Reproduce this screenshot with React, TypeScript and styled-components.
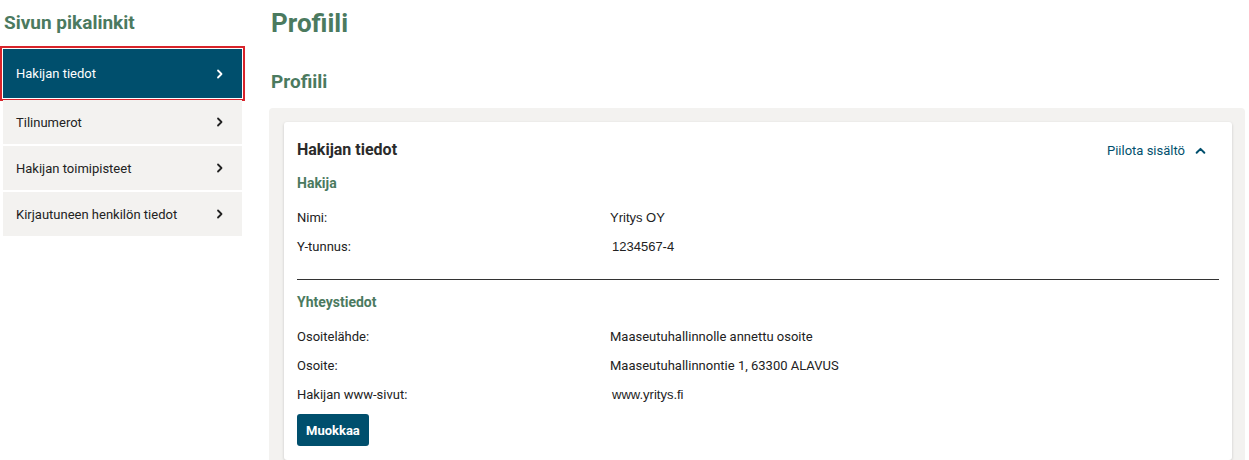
import React from 'react'
import styled, { createGlobalStyle } from 'styled-components'

const GlobalStyle = createGlobalStyle`
    body {
        margin: 0;
        font-family: Roboto, "Liberation Sans", sans-serif;
        background: #fff;
        color: #222;
    }
`;

const links = ['Hakijan tiedot', 'Tilinumerot', 'Hakijan toimipisteet', 'Kirjautuneen henkilön tiedot'];

const Chevron = ({ up }: { up?: boolean }) => (
    <svg width="10" height="10" viewBox="0 0 10 10" fill="none">
        <path
            d={up ? 'M1.5 7L5 3.5L8.5 7' : 'M3 1.5L6.5 5L3 8.5'}
            stroke="currentColor"
            strokeWidth="1.8"
            strokeLinecap="round"
            strokeLinejoin="round"
        />
    </svg>
);

export default function App() {
    return (
        <>
            <GlobalStyle />
            <Page>
                <Sidebar>
                    <SideTitle>Sivun pikalinkit</SideTitle>
                    <NavList>
                        {links.map((l, i) => (
                            <NavItem key={l} active={i === 0}>
                                {l}
                                <Chevron />
                            </NavItem>
                        ))}
                    </NavList>
                </Sidebar>
                <Main>
                    <PageTitle>Profiili</PageTitle>
                    <SectionTitle>Profiili</SectionTitle>
                    <Panel>
                        <Card>
                            <CardHeader>
                                <CardTitle>Hakijan tiedot</CardTitle>
                                <ToggleLink>
                                    Piilota sisältö
                                    <Chevron up />
                                </ToggleLink>
                            </CardHeader>
                            <GroupTitle>Hakija</GroupTitle>
                            <Row>
                                <Label>Nimi:</Label>
                                <Value alt>Yritys OY</Value>
                            </Row>
                            <Row>
                                <Label>Y-tunnus:</Label>
                                <Value alt shift>1234567-4</Value>
                            </Row>
                            <Divider />
                            <GroupTitle>Yhteystiedot</GroupTitle>
                            <Row>
                                <Label>Osoitelähde:</Label>
                                <Value>Maaseutuhallinnolle annettu osoite</Value>
                            </Row>
                            <Row>
                                <Label>Osoite:</Label>
                                <Value>Maaseutuhallinnontie 1, 63300 ALAVUS</Value>
                            </Row>
                            <Row>
                                <Label>Hakijan www-sivut:</Label>
                                <Value alt shift>www.yritys.fi</Value>
                            </Row>
                            <Button>Muokkaa</Button>
                        </Card>
                    </Panel>
                </Main>
            </Page>
        </>
    )
}

const Page = styled.div`
    display: flex;
    height: 460px;
    overflow: hidden;
`;

const Sidebar = styled.aside`
    width: 239px;
    flex-shrink: 0;
    padding: 0 0 0 3px;
`;

const SideTitle = styled.h2`
    margin: 12px 0 0 1px;
    font-size: 19px;
    line-height: 22px;
    font-weight: 700;
    color: #4b7a5f;
`;

const NavList = styled.nav`
    display: flex;
    flex-direction: column;
    gap: 2px;
    margin-top: 15px;
`;

const NavItem = styled.div<{ active?: boolean }>`
    display: flex;
    align-items: center;
    justify-content: space-between;
    height: ${p => (p.active ? '49px' : '44px')};
    padding: 0 17px 0 13px;
    font-size: 13px;
    color: ${p => (p.active ? '#fff' : '#222')};
    background: ${p => (p.active ? '#004f6d' : '#f3f2f0')};
    outline: ${p => (p.active ? '2px solid #d8242b' : 'none')};
    outline-offset: 1px;
`;

const Main = styled.main`
    flex: 1;
    padding: 0 4px 0 27px;
`;

const PageTitle = styled.h1`
    margin: 6px 0 0 2px;
    font-size: 26px;
    line-height: 34px;
    font-weight: 700;
    color: #4b7a5f;
`;

const SectionTitle = styled.h2`
    margin: 30px 0 0 2px;
    font-size: 19px;
    line-height: 24px;
    font-weight: 700;
    color: #4b7a5f;
`;

const Panel = styled.section`
    margin-top: 14px;
    background: #f3f2f0;
    border-radius: 4px;
    padding: 14px 13px 14px 15px;
`;

const Card = styled.div`
    background: #fff;
    border-radius: 3px;
    box-shadow: 0 1px 3px rgba(0, 0, 0, 0.18);
    padding: 17px 13px 14px 13px;
`;

const CardHeader = styled.div`
    display: flex;
    align-items: center;
    justify-content: space-between;
    padding-right: 13px;
`;

const CardTitle = styled.h3`
    margin: 0;
    font-size: 16px;
    line-height: 22px;
    font-weight: 700;
    color: #2b2b2b;
`;

const ToggleLink = styled.a`
    display: flex;
    align-items: center;
    gap: 10px;
    font-size: 13px;
    color: #004f6d;
    cursor: pointer;
    svg {
        width: 11px;
        height: 11px;
    }
`;

const GroupTitle = styled.h4`
    margin: 12px 0 10px;
    font-size: 14px;
    line-height: 20px;
    font-weight: 700;
    color: #4b7a5f;
`;

const Row = styled.div`
    display: grid;
    grid-template-columns: 313px 1fr;
    align-items: center;
    height: 29px;
    font-size: 13px;
`;

const Label = styled.span`
    color: #222;
`;

const Value = styled.span<{ alt?: boolean; shift?: boolean }>`
    color: #222;
    font-family: ${p => (p.alt ? '"Liberation Sans", Arial, sans-serif' : 'inherit')};
    padding-left: ${p => (p.shift ? '2px' : '0')};
`;

const Divider = styled.hr`
    margin: 18px 0 0;
    border: none;
    border-top: 1px solid #333;
`;

const Button = styled.button`
    margin-top: 5px;
    height: 32px;
    padding: 0 9px;
    border: none;
    border-radius: 3px;
    background: #004f6d;
    color: #fff;
    font-family: Roboto, sans-serif;
    font-size: 13px;
    font-weight: 700;
`;
